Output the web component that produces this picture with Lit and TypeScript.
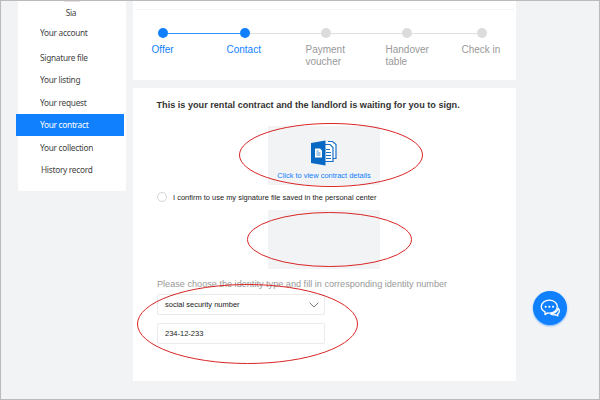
import { LitElement, html, css, svg } from "lit";
import { customElement } from "lit/decorators.js";
import { classMap } from "lit/directives/class-map.js";

@customElement("side-nav")
class SideNav extends LitElement {
  static styles = css`
    :host { display: block; width: 108px; height: 190px; background: #fff; border-radius: 0 0 2px 2px;
      font-family: "Noto Sans", sans-serif; font-size: 8.3px; letter-spacing: -0.28px; color: #444; }
    .avatar { display: block; width: 16px; height: 1px; margin: 0 auto; background: #efdcdf; border-radius: 0 0 9px 9px; }
    .name { height: 19.6px; line-height: 22px; text-align: center; margin-right: 2px; }
    .item { display: flex; align-items: center; height: 22.5px; padding-left: 22px; white-space: nowrap; }
    .first { margin-bottom: 2px; }
    .active { background: #1080ff; color: #fff; margin: 0 2px 0 -2px; padding-left: 24px; }
    .inset { padding-left: 23px; }
  `;
  items = ["Your account", "Signature file", "Your listing", "Your request", "Your contract", "Your collection", "History record"];
  render() {
    return html`<span class="avatar"></span><div class="name">Sia</div>
      ${this.items.map((t, i) => html`<div class=${classMap({ item: true, first: i === 0, active: i === 4, inset: i === 6 })}>${t}</div>`)}`;
  }
}

@customElement("step-bar")
class StepBar extends LitElement {
  static styles = css`
    :host { display: block; border-top: 1px solid #f3f4f5; margin-left: 2px; margin-right: 2px; padding: 18px 0 0 23px; }
    .dots { display: flex; align-items: center; height: 10px; }
    .dot { width: 10px; height: 10px; border-radius: 50%; background: #dcdcdc; flex: none; }
    .line { height: 1px; background: #e0e0e0; flex: none; width: 71px; }
    .line.short { width: 65px; }
    .on { background: #1080ff; }
    .line.on { background: #3391ff; width: 72px; }
    .labels { display: grid; grid-template-columns: 75px 79px 80px 76px 50px; margin: 6px 0 0 -6.5px;
      font-size: 10px; line-height: 12.4px; color: #999; }
    .blue { color: #1080ff; }
  `;
  render() {
    return html`<div class="dots">
        <i class="dot on"></i><i class="line on"></i><i class="dot on"></i><i class="line"></i><i class="dot"></i><i class="line"></i><i class="dot"></i><i class="line short"></i><i class="dot"></i>
      </div>
      <div class="labels"><span class="blue">Offer</span><span class="blue">Contact</span><span>Payment<br>voucher</span><span>Handover<br>table</span><span>Check in</span></div>`;
  }
}

@customElement("contract-form")
class ContractForm extends LitElement {
  static styles = css`
    :host { display: block; padding: 11px 0 0 24px; color: #222; }
    .title { font-weight: bold; font-size: 9.13px; line-height: 12px; color: #333; white-space: nowrap; margin-left: -0.5px; }
    .tile { display: flex; flex-direction: column; align-items: center; box-sizing: border-box; width: 112px; height: 59px;
      margin: 15px 0 0 111px; background: #f2f3f5; }
    .doc { display: block; width: 26px; height: 26px; margin-top: 14px; }
    .link { font-size: 7.45px; line-height: 10px; margin-top: 5px; color: #1080ff; white-space: nowrap; }
    .confirm { display: flex; align-items: center; gap: 6px; height: 10px; margin-top: 7px; font-size: 7.47px; white-space: nowrap; }
    .radio { box-sizing: border-box; width: 10px; height: 10px; border: 1px solid #d5d5d5; border-radius: 50%; }
    .sign { margin-top: 8px; }
    .hint { margin-top: 9px; font-size: 9.14px; line-height: 12px; color: #999; white-space: nowrap; }
    .field { display: flex; align-items: center; justify-content: space-between; box-sizing: border-box; width: 168px; height: 21px;
      border: 1px solid #ebebeb; border-radius: 2px; padding: 0 5px 0 7px; font-size: 7.5px; }
    .select { margin-top: 4px; }
    .number { margin-top: 8px; }
    .chev { width: 10px; height: 6px; }
  `;
  render() {
    return html`<div class="title">This is your rental contract and the landlord is waiting for you to sign.</div>
      <div class="tile">
        <svg class="doc" viewBox="0 0 26 26">
          <path d="M17 1.5h4.5l3.5 3v14h-6" fill="#fff" stroke="#1a6fc4" stroke-width="1.2"/>
          <path d="M14 4.5h5l3 3v14h-8" fill="#fff" stroke="#1a6fc4" stroke-width="1.2"/>
          <path d="M15 9.5h4M15 12.5h5M15 15.5h5M15 18.5h5" stroke="#1a6fc4" fill="none"/>
          <path d="M0 3 14.5 .5v25L0 23z" fill="#0869c4"/>
          <path d="M4 8.5h5l2 2v7H4z" fill="#fff"/>
          <path d="M5.5 11h2M5.5 13h4M5.5 15h4" stroke="#1a6fc4" stroke-width=".8"/>
        </svg>
        <span class="link">Click to view contract details</span>
      </div>
      <div class="confirm"><i class="radio"></i><span>I confirm to use my signature file saved in the personal center</span></div>
      <div class="tile sign"></div>
      <div class="hint">Please choose the identity type and fill in corresponding identity number</div>
      <div class="field select"><span>social security number</span>
        <svg class="chev" viewBox="0 0 10 6"><path d="M.6.7 5 5 9.4.7" fill="none" stroke="#777"/></svg></div>
      <div class="field number">234-12-233</div>`;
  }
}

@customElement("app-root")
class AppRoot extends LitElement {
  static styles = css`
    :host { display: block; position: relative; box-sizing: border-box; width: 600px; height: 400px; overflow: hidden;
      border: 1px solid #bbb; background: #f2f3f5; font-family: "Liberation Sans", Arial, sans-serif; }
    .page { display: flex; gap: 7px; padding-left: 17px; align-items: flex-start; }
    .main { display: flex; flex-direction: column; gap: 8px; width: 383px; }
    .card { background: #fff; }
    .progress { box-sizing: border-box; height: 79px; padding-top: 8px; }
    .form { height: 293px; }
    .marks { position: absolute; inset: -1px; width: 600px; height: 400px; pointer-events: none; }
    .chat { position: absolute; left: 532px; top: 290px; width: 34px; height: 34px; border-radius: 50%; background: #1080ff;
      box-shadow: 0 1px 2px #1080ff99; }
    .chat svg { display: block; width: 34px; height: 34px; }
  `;
  render() {
    const marks = [[331, 155, 91.5, 31.5], [329.5, 239.5, 82, 27], [247.5, 324, 110, 39.5]];
    return html`<div class="page"><side-nav></side-nav>
        <div class="main"><section class="card progress"><step-bar></step-bar></section>
          <section class="card form"><contract-form></contract-form></section></div></div>
      <svg class="marks" viewBox="0 0 600 400">${marks.map(([x, y, rx, ry]) => svg`<ellipse cx=${x} cy=${y} rx=${rx} ry=${ry} fill="none" stroke="#d92525"/>`)}</svg>
      <div class="chat"><svg viewBox="0 0 34 34" fill="none" stroke="#fff" stroke-width="1.3" stroke-linecap="round" stroke-linejoin="round">
        <path d="M12 23.6v-2.7C9.6 19.800 8.300 17.900 8.300 15.600c0-3.700 3.600-6.500 8-6.500s8 2.800 8 6.500-3.600 6.500-8 6.500c-.6 0-1.200 0-1.800-.2z"/>
        <path d="M25.200 17.200c1.800 2 1.400 4.500-.6 5.700l.3 2-2.600-1.200c-1.900.4-3.500 0-4.500-.8 3.500-.5 6.300-2.300 7.400-5.700z"/>
        <path d="M12.600 15.700h.1M16.300 15.700h.1M20 15.700h.1" stroke-width="2"/></svg></div>`;
  }
}
